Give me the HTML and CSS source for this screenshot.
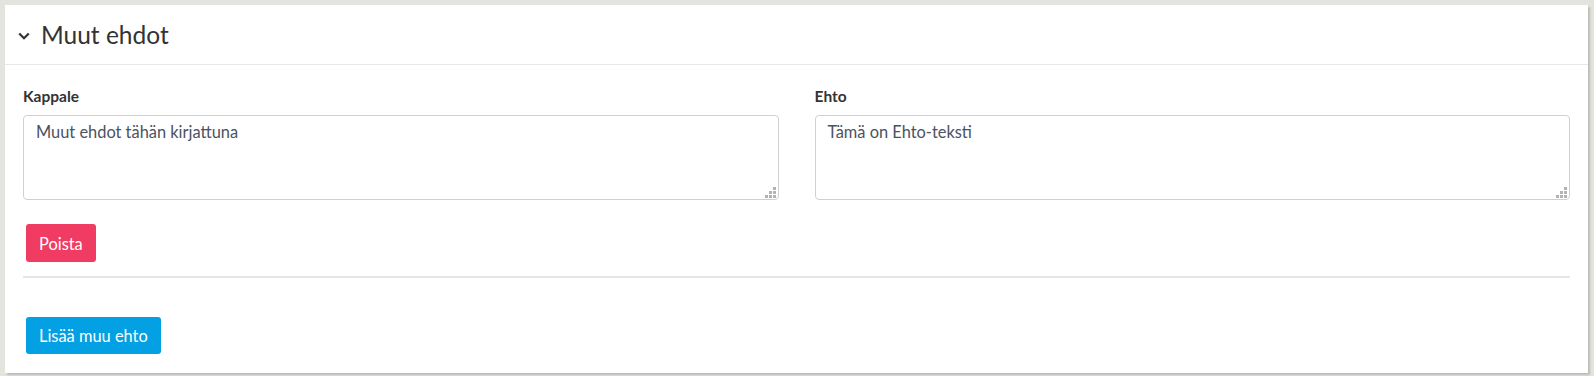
FILE: index.html
```html
<!DOCTYPE html>
<html lang="fi">
<head>
<meta charset="utf-8">
<title>Muut ehdot</title>
<link rel="stylesheet" href="styles.css">
</head>
<body>
<section class="card">
  <header class="card-header">
    <svg class="chevron" width="12" height="8" viewBox="0 0 12 8"><path d="M1.2 1.5 L6 6.2 L10.8 1.5" fill="none" stroke="#333" stroke-width="2.2"/></svg>
    <h2 class="title">Muut ehdot</h2>
  </header>
  <div class="card-body">
    <div class="row">
      <div class="field">
        <label class="label">Kappale</label>
        <div class="input-wrap">
          <textarea class="input">Muut ehdot tähän kirjattuna</textarea>
          <svg class="grip" width="11" height="11" viewBox="0 0 11 11"><g fill="#b3b3b3"><rect x="8" y="0" width="3" height="3"/><rect x="4" y="4" width="3" height="3"/><rect x="8" y="4" width="3" height="3"/><rect x="0" y="8" width="3" height="3"/><rect x="4" y="8" width="3" height="3"/><rect x="8" y="8" width="3" height="3"/></g></svg>
        </div>
      </div>
      <div class="field">
        <label class="label">Ehto</label>
        <div class="input-wrap">
          <textarea class="input">Tämä on Ehto-teksti</textarea>
          <svg class="grip" width="11" height="11" viewBox="0 0 11 11"><g fill="#b3b3b3"><rect x="8" y="0" width="3" height="3"/><rect x="4" y="4" width="3" height="3"/><rect x="8" y="4" width="3" height="3"/><rect x="0" y="8" width="3" height="3"/><rect x="4" y="8" width="3" height="3"/><rect x="8" y="8" width="3" height="3"/></g></svg>
        </div>
      </div>
    </div>
    <div class="actions">
      <button class="btn btn-danger">Poista</button>
    </div>
    <hr class="divider">
    <div class="footer">
      <button class="btn btn-primary">Lisää muu ehto</button>
    </div>
  </div>
</section>
</body>
</html>
```
FILE: styles.css
```css
html, body {
  margin: 0;
  padding: 0;
  background: #e4e4de;
}
body {
  font-family: "Lato", "Noto Sans", sans-serif;
  color: #333;
  padding: 5px 6px 3px 5px;
}
.card {
  background: #fff;
  height: 368px;
  box-shadow: 2px 2px 2px rgba(0, 0, 0, 0.18);
  box-sizing: border-box;
}
.card-header {
  height: 60px;
  box-sizing: border-box;
  border-bottom: 1px solid #e8e8e8;
  display: flex;
  align-items: center;
  padding-left: 13px;
}
.chevron {
  margin-right: 11px;
  margin-top: 3px;
}
.title {
  margin: 0;
  font-size: 24.5px;
  font-weight: 400;
  color: #333;
}
.card-body {
  padding: 21px 18px 0 18px;
}
.row {
  display: grid;
  grid-template-columns: 1fr 1fr;
  column-gap: 36px;
}
.field {
  display: flex;
  flex-direction: column;
}
.label {
  font-size: 15.5px;
  font-weight: 700;
  line-height: 20px;
  color: #333;
  margin-bottom: 9px;
}
.input-wrap {
  position: relative;
  display: flex;
}
.input {
  flex: 1;
  height: 85px;
  box-sizing: border-box;
  border: 1px solid #cdd0d5;
  border-radius: 4px;
  padding: 4px 12px;
  font-family: inherit;
  font-size: 16.4px;
  line-height: 24px;
  color: #4b5262;
  resize: none;
  outline: none;
}
.grip {
  position: absolute;
  right: 3px;
  bottom: 2px;
}
.actions {
  padding: 24px 0 0 3px;
}
.btn {
  border: none;
  border-radius: 3px;
  color: #fff;
  font-family: inherit;
  font-size: 16.4px;
  padding: 0 13px;
  cursor: pointer;
}
.btn-danger {
  background: #f03c62;
  height: 38px;
}
.btn-primary {
  background: #03a0e3;
  height: 37px;
}
.divider {
  border: 0;
  border-top: 2px solid #e6e6e6;
  margin: 14px 0 0 0;
}
.footer {
  padding: 39px 0 0 3px;
}
```
